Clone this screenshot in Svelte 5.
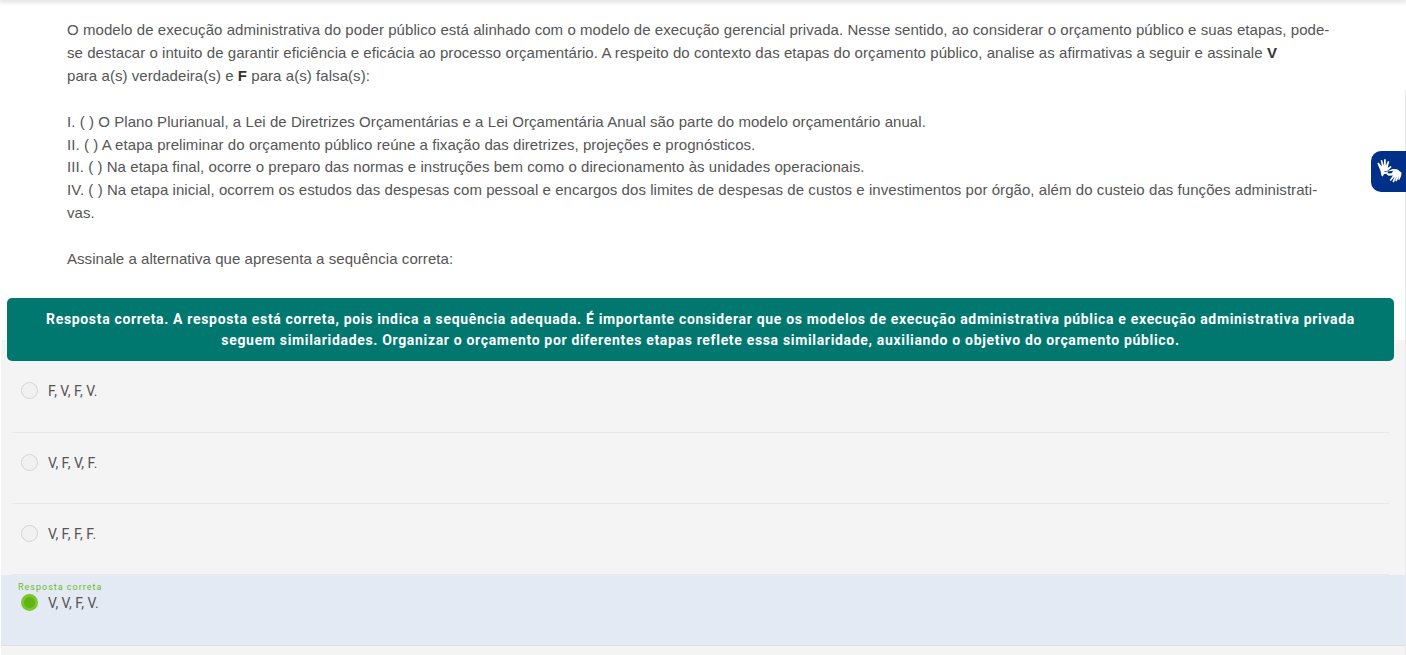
<script>
	const options = [
		{ label: 'F, V, F, V.' },
		{ label: 'V, F, V, F.' },
		{ label: 'V, F, F, F.' },
		{ label: 'V, V, F, V.', correct: true }
	];
</script>

<div class="page">
	<div class="topbar"></div>

	<section class="question">
		<p>
			O modelo de execução administrativa do poder público está alinhado com o modelo de execução gerencial privada. Nesse sentido, ao considerar o orçamento público e suas etapas, pode-<br />
			se destacar o intuito de garantir eficiência e eficácia ao processo orçamentário. A respeito do contexto das etapas do orçamento público, analise as afirmativas a seguir e assinale <b>V</b><br />
			para a(s) verdadeira(s) e <b>F</b> para a(s) falsa(s):
		</p>
		<p>
			I. ( ) O Plano Plurianual, a Lei de Diretrizes Orçamentárias e a Lei Orçamentária Anual são parte do modelo orçamentário anual.<br />
			II. ( ) A etapa preliminar do orçamento público reúne a fixação das diretrizes, projeções e prognósticos.<br />
			III. ( ) Na etapa final, ocorre o preparo das normas e instruções bem como o direcionamento às unidades operacionais.<br />
			IV. ( ) Na etapa inicial, ocorrem os estudos das despesas com pessoal e encargos dos limites de despesas de custos e investimentos por órgão, além do custeio das funções administrati-<br />
			vas.
		</p>
		<p>Assinale a alternativa que apresenta a sequência correta:</p>
	</section>

	<div class="feedback">
		Resposta correta. A resposta está correta, pois indica a sequência adequada. É importante considerar que os modelos de execução administrativa pública e execução administrativa privada seguem similaridades. Organizar o orçamento por diferentes etapas reflete essa similaridade, auxiliando o objetivo do orçamento público.
	</div>

	<ul class="options">
		{#each options as opt}
			<li class:correct={opt.correct}>
				{#if opt.correct}<span class="tag">Resposta correta</span>{/if}
				<div class="row">
					<span class="radio"></span>
					<span class="label">{opt.label}</span>
				</div>
			</li>
		{/each}
	</ul>

	<div class="track"></div>

	<button class="vlibras" aria-label="Libras">
		<svg width="28" height="28" viewBox="0 0 24 24" fill="#fff">
			<path d="M2 4.500l1-.6 3 3.400L4.800 2l1.300-.3 1.400 5L7.800 1h1.400l.1 5.700L11 2.600l1.200.5-1.300 5.300 2.600-1.600.8 1-3.500 3.200-3.500.5 2 .6 1 1.500-2.500.2-1.200 2-1-.6-.9-4.200z" />
			<path d="M9.500 11.800l5.500-2.300 4 .2 3.800 2.900-.5 3-1.500 3.200-1-.4.800-2.800-2 4.500-1.200-.5 1.300-4-2.500 5.300-1.200-.6 1.800-4.500-3.200 3.900-1-.8 2.800-3.900-3.800.3-1.500-1.200-.9-2.200 1.100-.5 1.200 1.800 2.700-.1 1.400-2.100-3.500.3z" />
		</svg>
	</button>
</div>

<style>
	:global(body) {
		margin: 0;
		background: #fff;
	}

	.page {
		height: 655px;
		overflow: hidden;
		position: relative;
		font-family: "Liberation Sans", Arial, sans-serif;
		color: #3c3c3c;
	}

	.topbar {
		height: 0;
		box-shadow: 0 0 5px 1px rgba(0, 0, 0, 0.3);
	}

	.question {
		padding: 19px 60px 0 67px;
		font-size: 15px;
		letter-spacing: 0.06px;
		line-height: 22.9px;
		color: #555;
		white-space: nowrap;
		height: 298px;
		box-sizing: border-box;
	}

	.question p {
		margin: 0 0 22.9px;
	}

	.question b {
		color: #333;
	}

	.feedback {
		position: relative;
		z-index: 1;
		margin: 0 12px -21px 7px;
		height: 63px;
		box-sizing: border-box;
		padding: 11px 30px;
		background: #00786f;
		border-radius: 5px;
		color: #fff;
		font-family: Roboto, sans-serif;
		font-weight: 700;
		font-size: 14px;
		line-height: 21px;
		letter-spacing: 0.67px;
		text-align: center;
	}

	.options {
		list-style: none;
		margin: 0 1px;
		padding: 21px 0 20px;
		background: #f4f4f4;
	}

	.options li {
		height: 71px;
		box-sizing: border-box;
		position: relative;
		border-bottom: 1px solid #e8e8e8;
		margin: 0 16px 0 11px;
		padding-top: 21px;
	}

	.options li:first-child {
		height: 72px;
	}

	.options li.correct {
		margin: 0;
		padding: 6px 0 0 17px;
		background: #e4eaf3;
		border-bottom: 1px solid #dde1e6;
	}

	.row {
		display: flex;
		align-items: center;
		gap: 10px;
		margin-left: 9px;
	}

	.correct .row {
		margin-left: 3px;
		margin-top: 1px;
	}

	.radio {
		width: 15px;
		height: 15px;
		border: 1px solid #d4d4d4;
		border-radius: 50%;
		background: #f1f1f1;
	}

	.correct .radio {
		width: 11px;
		height: 11px;
		border: 3px solid #7cc62d;
		background: #5fb612;
	}

	.label {
		font-family: Roboto, sans-serif;
		font-size: 14px;
		color: #555;
	}

	.tag {
		display: block;
		font-family: Roboto, sans-serif;
		font-size: 9px;
		line-height: 12px;
		letter-spacing: 1px;
		color: #6bbb1f;
	}

	.track {
		position: absolute;
		top: 90px;
		right: 0;
		width: 1px;
		bottom: 0;
		background: #eaeaea;
	}

	.vlibras {
		position: absolute;
		top: 151px;
		right: 0;
		width: 35px;
		height: 41px;
		padding: 0;
		border: none;
		border-radius: 10px 0 0 10px;
		background: #003087;
		display: flex;
		align-items: center;
		justify-content: center;
	}
</style>
